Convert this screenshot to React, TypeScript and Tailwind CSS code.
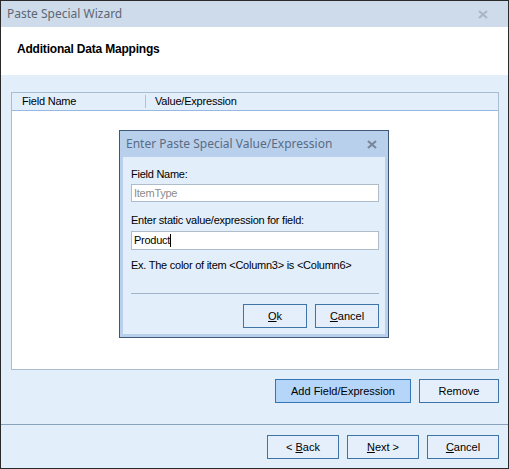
import React from "react";

const ui = { fontFamily: '"Liberation Sans", Arial, sans-serif' };
const seg = { fontFamily: '"Noto Sans", "Open Sans", sans-serif' };

function Btn({
  children,
  w,
  primary,
}: {
  children: React.ReactNode;
  w: string;
  primary?: boolean;
}) {
  return (
    <div
      className={`${w} h-[24px] flex items-center justify-center border text-[11px] text-black ${
        primary ? "bg-[#b5d5f9] border-[#3476b3]" : "bg-[#e5effb] border-[#3f74a8]"
      }`}
    >
      {children}
    </div>
  );
}

function CloseX({ color }: { color: string }) {
  return (
    <svg width="10" height="9" viewBox="0 0 10 9">
      <path d="M1 1 L9 8 M9 1 L1 8" stroke={color} strokeWidth="2.2" fill="none" />
    </svg>
  );
}

export default function App() {
  return (
    <div
      className="relative w-[509px] h-[469px] border border-[#2a2a2a] bg-[#e3eefb] flex flex-col overflow-hidden"
      style={ui}
    >
      {/* Title bar */}
      <div className="h-[26px] bg-[#cedbea] flex items-center justify-between pl-[6px] pr-[20px] shrink-0">
        <span className="text-[12px] text-[#5d6773]" style={seg}>
          Paste Special Wizard
        </span>
        <CloseX color="#aab6c3" />
      </div>

      {/* Header */}
      <div className="h-[48px] bg-white shrink-0 pl-[16px] pt-[9px]">
        <span className="text-[12px] font-bold text-black tracking-[-0.2px]">Additional Data Mappings</span>
      </div>

      {/* Body */}
      <div className="flex-1 flex flex-col">
        <div className="pl-[10px] pr-[9px] pt-[17px]">
          <div className="h-[278px] border border-[#a9bcd2] bg-white flex flex-col">
            <div className="h-[18px] bg-[#e3eefb] border-b border-[#98b8e2] flex items-center text-[11px] text-black tracking-[-0.2px]">
              <div className="w-[133px] pl-[10px]">Field Name</div>
              <div className="w-px h-[13px] bg-[#a9c3e2]" />
              <div className="pl-[9px]">Value/Expression</div>
            </div>
          </div>
          <div className="mt-[9px] flex justify-end gap-[8px]">
            <Btn w="w-[136px]" primary>
              Add Field/Expression
            </Btn>
            <Btn w="w-[80px]">Remove</Btn>
          </div>
        </div>
        <div className="mt-[21px] h-px bg-[#8aa3bd]" />
        <div className="pl-[10px] pr-[9px] mt-[10px] flex justify-end gap-[8px]">
          <Btn w="w-[72px]">
            &lt; <span className="underline ml-[3px]">B</span>ack
          </Btn>
          <Btn w="w-[72px]">
            <span className="underline">N</span>ext &gt;
          </Btn>
          <Btn w="w-[72px]">
            <span className="underline">C</span>ancel
          </Btn>
        </div>
      </div>

      {/* Modal dialog */}
      <div className="absolute left-[118px] top-[129px] w-[270px] h-[208px] border border-[#3d5877] bg-[#b8d0ec] flex flex-col">
        <div className="h-[26px] flex items-center justify-between pl-[6px] pr-[11px] shrink-0">
          <span className="text-[12px] text-[#5a6c83]" style={seg}>
            Enter Paste Special Value/Expression
          </span>
          <CloseX color="#7b8798" />
        </div>
        <div className="flex-1 mx-[3px] mb-[3px] bg-[#e3eefb] flex flex-col pl-[8px] pr-[6px] text-[11px] text-black tracking-[-0.25px]">
          <div className="mt-[11px] leading-[13px]">Field Name:</div>
          <div className="mt-[3px] h-[18px] bg-white border border-[#aebccc] flex items-center pl-[2px] text-[#8c8c8c]">
            ItemType
          </div>
          <div className="mt-[12px] leading-[13px]">Enter static value/expression for field:</div>
          <div className="mt-[4px] h-[19px] bg-white border border-[#aebccc] flex items-center pl-[2px]">
            Product
            <span className="inline-block w-px h-[13px] bg-black" />
          </div>
          <div className="mt-[9px] leading-[13px]">Ex. The color of item &lt;Column3&gt; is &lt;Column6&gt;</div>
          <div className="mt-[21px] h-px bg-[#9fb3ca]" />
          <div className="mt-[10px] flex justify-end gap-[8px] tracking-normal">
            <Btn w="w-[64px]">
              <span className="underline">O</span>k
            </Btn>
            <Btn w="w-[64px]">
              <span className="underline">C</span>ancel
            </Btn>
          </div>
        </div>
      </div>
    </div>
  );
}
